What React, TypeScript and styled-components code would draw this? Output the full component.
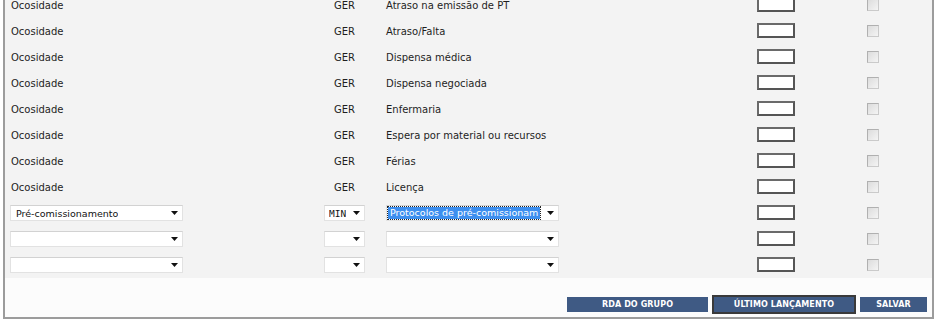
import React from "react";
import styled, { createGlobalStyle } from "styled-components";

const GlobalStyle = createGlobalStyle`
  html, body { margin: 0; padding: 0; background: #ffffff; }
  body { font-family: "DejaVu Sans", Verdana, sans-serif; font-size: 10px; color: #1e1e1e; overflow: hidden; }
`;

const Frame = styled.div`
  box-sizing: border-box;
  width: 931px;
  margin: -8px 0 0 3px;
  border: 2px solid #9c9c9c;
  border-top: none;
  background: #fcfcfc;
`;

const Table = styled.div`
  background: #f3f3f3;
`;

const Row = styled.div`
  display: grid;
  grid-template-columns: 319px 41px 392px 38px 1fr;
  height: 26px;
  align-items: center;
`;

const CellA = styled.div<{ $pad: number }>`
  padding-left: ${(p) => p.$pad}px;
  white-space: nowrap;
`;

const CellB = styled.div`
  display: flex;
  justify-content: center;
`;

const CellC = styled.div`
  padding-left: 21px;
  white-space: nowrap;
`;

const CellD = styled.div`
  display: flex;
`;

const CellE = styled.div`
  padding-left: 72px;
  display: flex;
`;

const TextBox = styled.div`
  box-sizing: border-box;
  width: 38px;
  height: 15px;
  background: #fff;
  border: 2px solid #6a6a6a;
  border-right-color: #555;
  border-bottom-color: #555;
  margin-top: -2px;
`;

const Check = styled.div`
  box-sizing: border-box;
  width: 12px;
  height: 12px;
  border: 1px solid #b0b0b0;
  border-right-color: #cacaca;
  border-bottom-color: #cacaca;
  background: linear-gradient(135deg, #dcdcdc, #f4f4f4);
`;

const SelectBox = styled.div<{ $w: number; $mono?: boolean; $pl: number }>`
  box-sizing: border-box;
  width: ${(p) => p.$w}px;
  height: 16px;
  display: flex;
  align-items: center;
  justify-content: space-between;
  background: #fff;
  border: 1px solid #e2e2e2;
  border-top-color: #d2d2d2;
  padding: 0 4px 0 ${(p) => p.$pl}px;
  font-family: ${(p) => (p.$mono ? '"DejaVu Sans Mono", monospace' : '"DejaVu Sans", Verdana, sans-serif')};
  font-size: 9.5px;
  color: #111;
  white-space: nowrap;
  overflow: hidden;
`;

const SelText = styled.span`
  overflow: hidden;
`;

const Highlight = styled.span`
  background: #3d8fef;
  color: #fff;
  padding: 0 2px;
  outline: 1px dotted #222;
  line-height: 12px;
`;

const Arrow = () => (
  <svg width="7" height="4" viewBox="0 0 7 4" style={{ flex: "none" }}>
    <path d="M0 0H7L3.5 4Z" fill="#111" />
  </svg>
);

const ButtonBar = styled.div`
  display: flex;
  justify-content: flex-end;
  gap: 6px;
  padding: 19px 5px 5px 0;
`;

const Button = styled.div<{ $w: number; $active?: boolean }>`
  box-sizing: border-box;
  width: ${(p) => p.$w}px;
  height: 15px;
  background: #3f5a84;
  color: #fff;
  font-weight: bold;
  font-size: 8px;
  display: flex;
  align-items: center;
  justify-content: center;
  letter-spacing: 0.1px;
  outline: ${(p) => (p.$active ? "2px solid #3a3a3a" : "none")};
`;

const fixed = [
  "Atraso na emissão de PT",
  "Atraso/Falta",
  "Dispensa médica",
  "Dispensa negociada",
  "Enfermaria",
  "Espera por material ou recursos",
  "Férias",
  "Licença",
];

const Tail = () => (
  <>
    <CellD>
      <TextBox />
    </CellD>
    <CellE>
      <Check />
    </CellE>
  </>
);

export default function App() {
  return (
    <>
      <GlobalStyle />
      <Frame>
        <Table>
          {fixed.map((a) => (
            <Row key={a}>
              <CellA $pad={6}>Ocosidade</CellA>
              <CellB>GER</CellB>
              <CellC>{a}</CellC>
              <Tail />
            </Row>
          ))}
          <Row>
            <CellA $pad={5}>
              <SelectBox $w={173} $pl={5}>
                <SelText>Pré-comissionamento</SelText>
                <Arrow />
              </SelectBox>
            </CellA>
            <CellB>
              <SelectBox $w={41} $mono $pl={4}>
                <SelText>MIN</SelText>
                <Arrow />
              </SelectBox>
            </CellB>
            <CellC>
              <SelectBox $w={173} $pl={1}>
                <Highlight>Protocolos de pré-comissionam</Highlight>
                <Arrow />
              </SelectBox>
            </CellC>
            <Tail />
          </Row>
          {[0, 1].map((i) => (
            <Row key={i}>
              <CellA $pad={5}>
                <SelectBox $w={173} $pl={5}>
                  <SelText />
                  <Arrow />
                </SelectBox>
              </CellA>
              <CellB>
                <SelectBox $w={41} $pl={4}>
                  <SelText />
                  <Arrow />
                </SelectBox>
              </CellB>
              <CellC>
                <SelectBox $w={173} $pl={2}>
                  <SelText />
                  <Arrow />
                </SelectBox>
              </CellC>
              <Tail />
            </Row>
          ))}
        </Table>
        <ButtonBar>
          <Button $w={141}>RDA DO GRUPO</Button>
          <Button $w={140} $active>ÚLTIMO LANÇAMENTO</Button>
          <Button $w={67}>SALVAR</Button>
        </ButtonBar>
      </Frame>
    </>
  );
}
